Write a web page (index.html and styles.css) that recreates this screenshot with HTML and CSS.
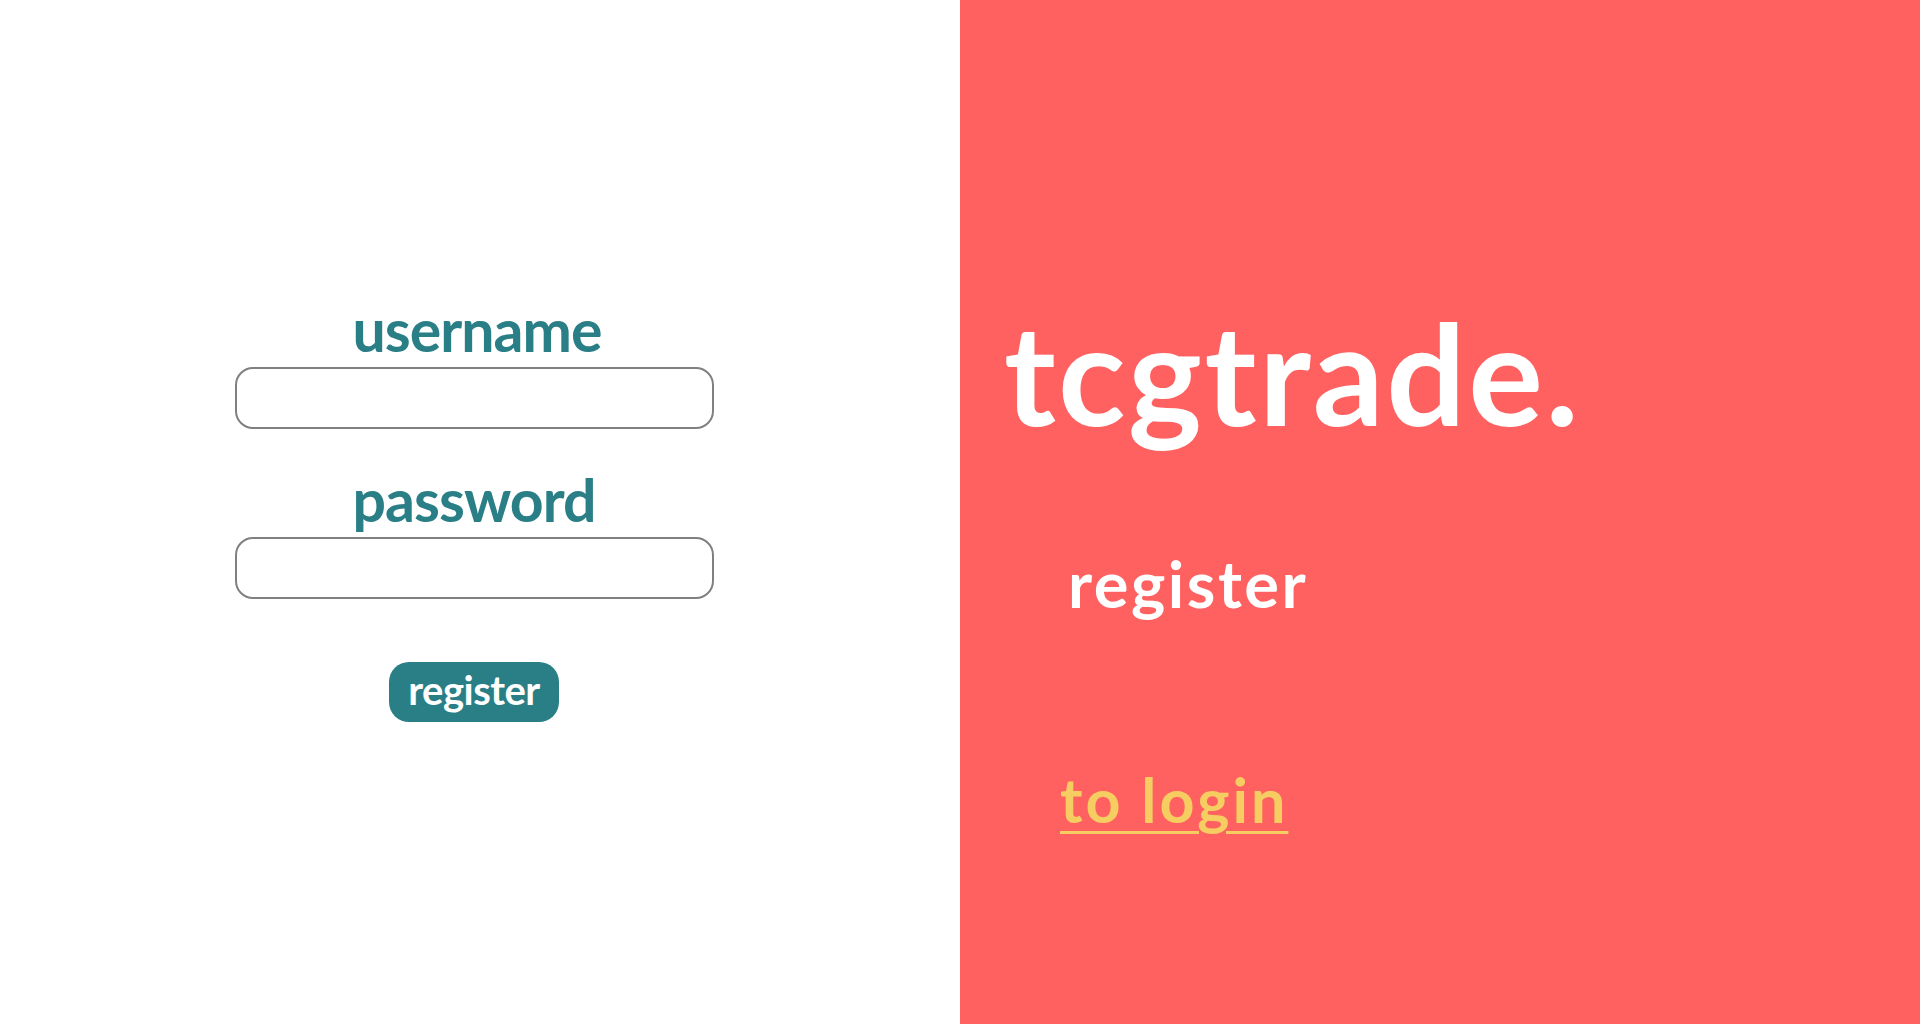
FILE: index.html
```html
<!DOCTYPE html>
<html lang="en">
<head>
<meta charset="utf-8">
<title>tcgtrade. register</title>
<link rel="stylesheet" href="styles.css">
</head>
<body>
<main class="page">
  <section class="form-side">
    <form class="register-form">
      <label class="field-label field-label-first" for="username">username</label>
      <input class="field-input" id="username" type="text">
      <label class="field-label field-label-second" for="password">password</label>
      <input class="field-input" id="password" type="password">
      <button class="submit-btn" type="button">register</button>
    </form>
  </section>
  <section class="brand-side">
    <h1 class="brand-title">tcgtrade.</h1>
    <p class="brand-subtitle">register</p>
    <a class="brand-link" href="#">to login</a>
  </section>
</main>
</body>
</html>
```
FILE: styles.css
```css
html, body {
  margin: 0;
  padding: 0;
}
body {
  font-family: "Lato", "Noto Sans", sans-serif;
  width: 1920px;
  height: 1024px;
  overflow: hidden;
}
.page {
  display: grid;
  grid-template-columns: 960px 960px;
  height: 1024px;
}
.form-side {
  background: #ffffff;
  display: flex;
  justify-content: center;
  padding-right: 12px;
}
.register-form {
  display: flex;
  flex-direction: column;
  align-items: center;
  padding-top: 295px;
}
.field-label {
  color: #2a7f87;
  font-weight: 700;
  font-size: 59px;
  line-height: 1.2;
  letter-spacing: -1px;
  margin-bottom: 1px;
}
.field-label-first {
  margin-left: 6px;
}
.field-label-second {
  margin-top: 36px;
}
.field-input {
  box-sizing: border-box;
  width: 479px;
  height: 62px;
  border: 2px solid #808080;
  border-radius: 18px;
  background: #fff;
  outline: none;
}
.submit-btn {
  margin-top: 63px;
  width: 170px;
  height: 60px;
  border: none;
  border-radius: 20px;
  background: #2a7f87;
  color: #fff;
  font-family: inherit;
  font-weight: 700;
  font-size: 40px;
  letter-spacing: -0.5px;
  padding: 0 0 4px;
}
.brand-side {
  background: #ff6161;
  display: flex;
  flex-direction: column;
  align-items: flex-start;
  padding-top: 288px;
  padding-left: 44px;
}
.brand-title {
  margin: 0;
  color: #fff;
  font-weight: 700;
  font-size: 140px;
  line-height: 1.2;
  letter-spacing: 2.5px;
}
.brand-subtitle {
  margin: 88px 0 0 64px;
  color: #fff;
  font-weight: 700;
  font-size: 65px;
  line-height: 1.2;
  letter-spacing: 2.5px;
}
.brand-link {
  margin: 141px 0 0 56px;
  color: #f6cd61;
  font-weight: 700;
  font-size: 61px;
  line-height: 1.2;
  letter-spacing: 3px;
  text-decoration: underline;
  text-decoration-thickness: 3px;
  text-underline-offset: 8px;
}
```
